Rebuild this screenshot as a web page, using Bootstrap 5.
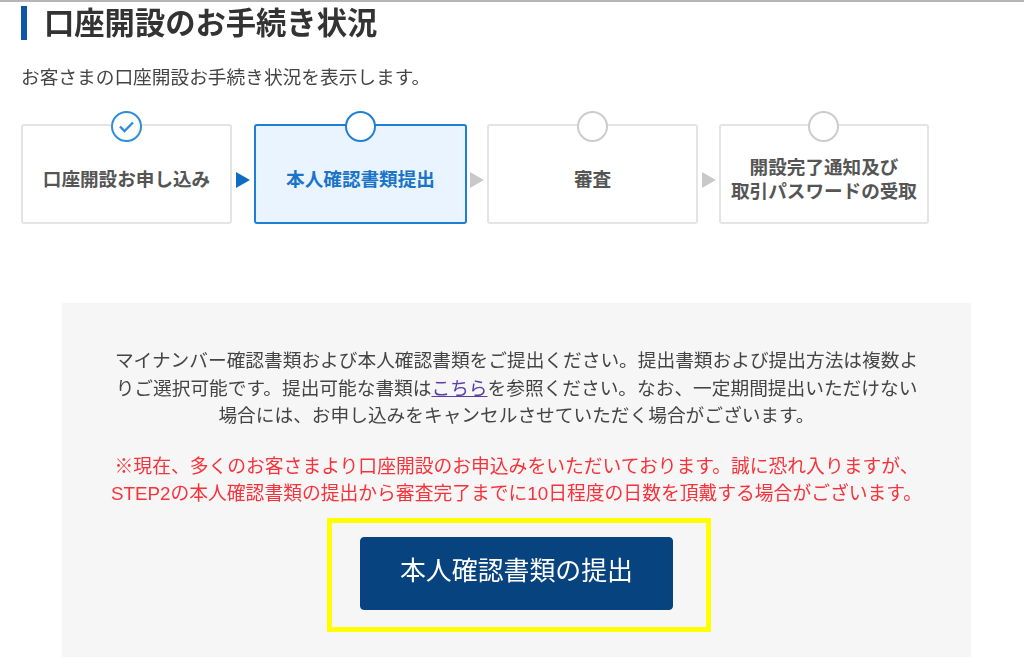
<!DOCTYPE html>
<html lang="ja">
<head>
    <meta charset="UTF-8">
    <meta name="viewport" content="width=device-width, initial-scale=1.0">
    <title>口座開設のお手続き状況</title>
    <link href="https://cdn.jsdelivr.net/npm/bootstrap@5.3.0/dist/css/bootstrap.min.css" rel="stylesheet">
    <style>
        html, body { height: 665px; overflow: hidden; background: #fff; }
        body { font-family: "Liberation Sans", "Noto Sans CJK JP", sans-serif; color: #333; border-top: 2px solid #b4b4b4; }
        .page-wrap { padding: 4px 53px 0 21px; filter: blur(0.45px); }
        .title-head { border-left: 6px solid #0b56a8; height: 34px; padding-left: 17px; margin: 0; font-size: 30.3px; line-height: 36px; font-weight: 700; color: #333; white-space: nowrap; }
        .intro-text { margin: 25px 0 0; font-size: 18.7px; line-height: 26px; color: #444; }
        .step-row { margin-top: 33px; height: 100px; }
        .step-box { position: relative; height: 100%; padding-top: 12px; background: #fff; border: 2px solid #e4e4e4; border-radius: 3px; font-size: 18.6px; font-weight: 700; line-height: 24px; color: #555; text-align: center; }
        .step-box.w-a { width: 211px; }
        .step-box.w-b { width: 213px; }
        .step-box.w-c { width: 210px; }
        .step-box.is-current { background: #eaf4fe; border-color: #1f7fd6; color: #1a74c8; }
        .step-dot { position: absolute; top: -15px; left: 50%; width: 31px; height: 31px; margin-left: -16px; background: #fff; border: 2px solid #ccc; border-radius: 50%; }
        .is-done .step-dot { border-color: #2f8ddc; }
        .is-current .step-dot { border-color: #1f7fd6; border-width: 2.5px; }
        .step-gap { width: 20px; padding-top: 12px; }
        .step-gap.is-first { width: 22px; }
        .step-gap.is-last { width: 21px; }
        .step-arrow { width: 0; height: 0; border-left: 14px solid #c9c9c9; border-top: 8.5px solid transparent; border-bottom: 8.5px solid transparent; }
        .step-arrow.is-on { border-left-color: #0e6cc4; }
        .info-panel { margin: 79px 0 0 41px; height: 354px; background: #f6f6f6; padding-top: 44px; text-align: center; }
        .info-text { margin: 0; font-size: 18.7px; line-height: 27.5px; color: #444; }
        .info-text a { color: #5b3fa8; }
        .info-red { margin: 23px 0 0; font-size: 18.8px; line-height: 27.5px; color: #f8323a; }
        .mark-frame { width: 384px; height: 114px; margin: 10px 0 0 265px; padding: 14px 0 0 28px; border: 5px solid #ffff00; }
        .submit-btn { display: block; width: 313px; height: 73px; background: #07437f; border-color: #07437f; color: #fff; font-size: 25.9px; border-radius: 4px; padding: 0 0 4px; }
    </style>
</head>
<body>
    <div class="page-wrap">
        <h1 class="title-head">口座開設のお手続き状況</h1>
        <p class="intro-text">お客さまの口座開設お手続き状況を表示します。</p>

        <!-- ステップ -->
        <div class="step-row d-flex">
            <div class="step-box w-a is-done d-flex align-items-center justify-content-center">
                <span class="step-dot d-flex align-items-center justify-content-center">
                    <svg width="19" height="15" viewBox="0 0 19 15"><path d="M3 7.5l4.5 4.5L16 3.5" fill="none" stroke="#2f8ddc" stroke-width="2.4"/></svg>
                </span>
                口座開設お申し込み
            </div>
            <div class="step-gap is-first d-flex align-items-center justify-content-center"><span class="step-arrow is-on"></span></div>
            <div class="step-box w-b is-current d-flex align-items-center justify-content-center">
                <span class="step-dot"></span>
                本人確認書類提出
            </div>
            <div class="step-gap d-flex align-items-center justify-content-center"><span class="step-arrow"></span></div>
            <div class="step-box w-a d-flex align-items-center justify-content-center">
                <span class="step-dot"></span>
                審査
            </div>
            <div class="step-gap is-last d-flex align-items-center justify-content-center"><span class="step-arrow"></span></div>
            <div class="step-box w-c d-flex align-items-center justify-content-center">
                <span class="step-dot"></span>
                <span>開設完了通知及び<br>取引パスワードの受取</span>
            </div>
        </div>

        <!-- 案内 -->
        <div class="info-panel">
            <p class="info-text">マイナンバー確認書類および本人確認書類をご提出ください。提出書類および提出方法は複数よ<br>りご選択可能です。提出可能な書類は<a href="#">こちら</a>を参照ください。なお、一定期間提出いただけない<br>場合には、お申し込みをキャンセルさせていただく場合がございます。</p>
            <p class="info-red">※現在、多くのお客さまより口座開設のお申込みをいただいております。誠に恐れ入りますが、<br>STEP2の本人確認書類の提出から審査完了までに10日程度の日数を頂戴する場合がございます。</p>
            <div class="mark-frame">
                <button type="button" class="btn btn-primary submit-btn">本人確認書類の提出</button>
            </div>
        </div>
    </div>
    <script src="https://cdn.jsdelivr.net/npm/bootstrap@5.3.0/dist/js/bootstrap.bundle.min.js"></script>
</body>
</html>
